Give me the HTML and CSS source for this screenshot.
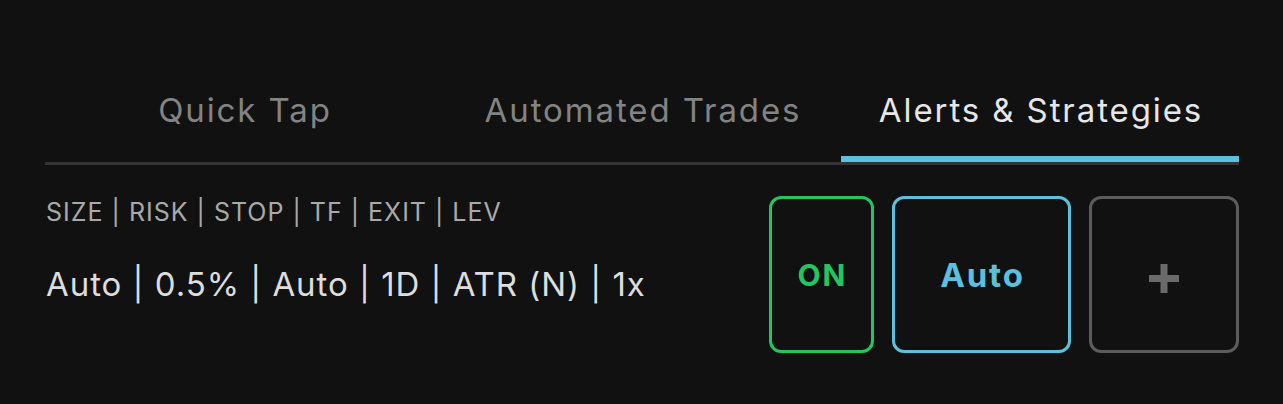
FILE: index.html
```html
<!DOCTYPE html>
<html lang="en">

<head>
    <meta charset="UTF-8">
    <meta name="viewport" content="width=device-width, initial-scale=1.0">
    <title>Alerts &amp; Strategies</title>
    <link rel="stylesheet" href="styles.css">
</head>

<body>
    <div class="panel">
        <ul class="tabs">
            <li class="tab">Quick Tap</li>
            <li class="tab">Automated Trades</li>
            <li class="tab active">Alerts &amp; Strategies</li>
        </ul>
        <div class="strategy">
            <div class="strategy-info">
                <div class="strategy-label">SIZE | RISK | STOP | TF | EXIT | LEV</div>
                <div class="strategy-value">Auto | 0.5% | Auto | 1D | ATR (N) | 1x</div>
            </div>
            <div class="strategy-actions">
                <button class="btn btn-on">ON</button>
                <button class="btn btn-auto">Auto</button>
                <button class="btn btn-add">
                    <svg width="30" height="29" viewBox="0 0 30 29">
                        <rect x="0" y="11" width="30" height="7" fill="#6a6a6a"></rect>
                        <rect x="11.5" y="0" width="7" height="29" fill="#6a6a6a"></rect>
                    </svg>
                </button>
            </div>
        </div>
    </div>
</body>

</html>
```

FILE: styles.css
```css
html,
body {
    margin: 0;
    background-color: #111111;
}

body {
    font-family: Inter, "Noto Sans", sans-serif;
}

.panel {
    padding: 90px 44px 0 45px;
}

.tabs {
    display: flex;
    margin: 0;
    padding: 0;
    list-style: none;
    border-bottom: 3px solid #333333;
}

.tabs>.tab {
    flex: 1;
    padding-bottom: 26px;
    padding-left: 2px;
    border-bottom: 6px solid transparent;
    font-size: 33px;
    line-height: 40px;
    letter-spacing: 1.9px;
    text-align: center;
    color: #838383;
}

.tabs>.tab.active {
    border-bottom-color: #5bc0de;
    color: #e6e6e6;
}

.strategy {
    display: flex;
    justify-content: space-between;
    align-items: flex-start;
    margin-top: 31px;
}

.strategy-info {
    padding-left: 1px;
}

.strategy-label {
    margin-top: 1px;
    font-size: 25px;
    line-height: 30px;
    letter-spacing: 1px;
    color: #a9a9a9;
}

.strategy-value {
    margin-top: 37px;
    font-size: 33px;
    line-height: 40px;
    letter-spacing: 0.95px;
    color: #dddddd;
}

.strategy-actions {
    display: flex;
    gap: 18px;
}

.btn {
    display: flex;
    align-items: center;
    justify-content: center;
    height: 157px;
    padding: 0;
    background: transparent;
    border: 3px solid;
    border-radius: 12px;
    font-family: Inter, "Noto Sans", sans-serif;
    font-weight: 700;
}

.btn-on {
    width: 105px;
    padding-left: 2px;
    border-color: #22c55e;
    color: #22c55e;
    font-size: 30px;
    letter-spacing: 2px;
}

.btn-auto {
    width: 179px;
    padding-left: 2px;
    border-color: #5bc0de;
    color: #5bc0de;
    font-size: 33px;
    letter-spacing: 1.8px;
}

.btn-add {
    width: 150px;
    border-color: #5c5c5c;
    padding-top: 8px;
}
```
